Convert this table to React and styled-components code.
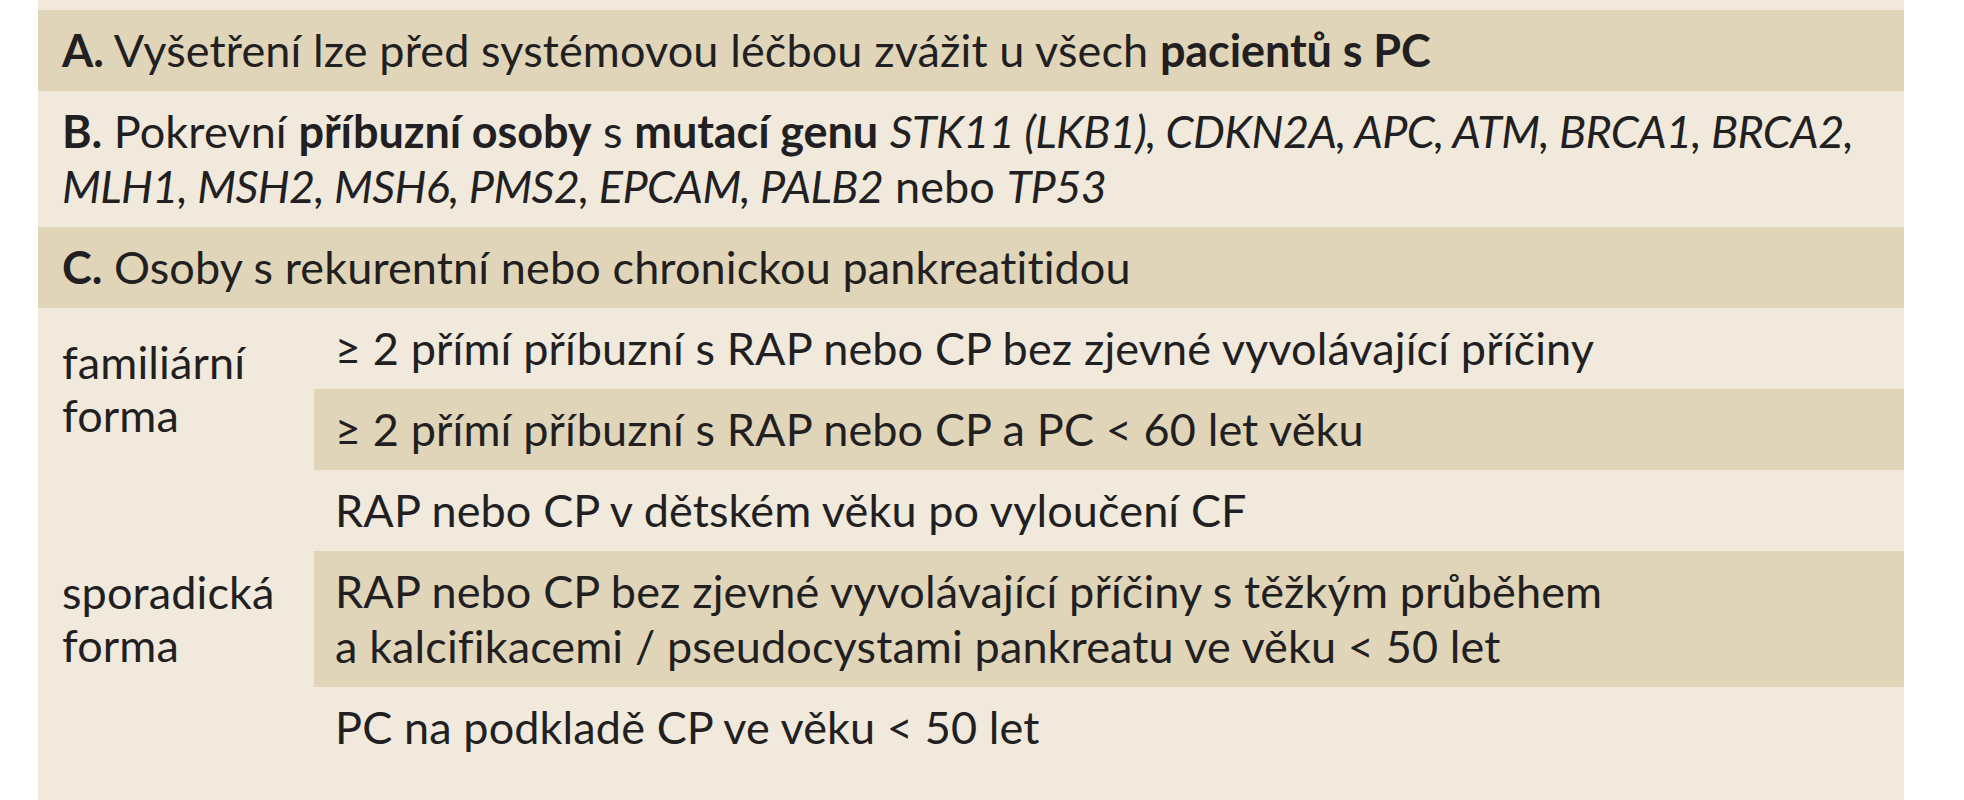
import React from "react";
import styled, { createGlobalStyle } from "styled-components";

const Global = createGlobalStyle`
  html, body { margin: 0; padding: 0; background: #ffffff; }
  body { font-family: Lato, "Open Sans", sans-serif; color: #221f22; }
`;

const DARK = "#e0d5b8";
const LIGHT = "#f0e9dc";

const Page = styled.div`
  width: 1964px;
  height: 800px;
  overflow: hidden;
  background: #ffffff;
`;

const Panel = styled.div`
  margin-left: 38px;
  width: 1866px;
  min-height: 800px;
  padding-top: 10px;
  box-sizing: border-box;
  background: ${LIGHT};
  font-family: Lato, "Open Sans", sans-serif;
  font-size: 45px;
  line-height: 55px;
  letter-spacing: 0.12px;
  color: #221f22;
`;

const Row = styled.div`
  background: ${(p) => (p.$shade ? DARK : "transparent")};
  padding: 13px 24px;
  white-space: nowrap;
`;

const SubGrid = styled.div`
  display: grid;
  grid-template-columns: 276px 1fr;
`;

const Label = styled.div`
  grid-column: 1;
  grid-row: ${(p) => p.$rows};
  display: flex;
  align-items: center;
  padding-left: 24px;
  line-height: 53px;
`;

const Cell = styled.div`
  grid-column: 2;
  background: ${(p) => (p.$shade ? DARK : "transparent")};
  padding: 13px 21px;
  white-space: nowrap;
`;

const B = styled.b`
  font-weight: 700;
  letter-spacing: -0.1px;
`;

const I = styled.i`
  font-style: italic;
  letter-spacing: -0.6px;
`;

export default function App() {
  return (
    <Page>
      <Global />
      <Panel>
        <Row $shade>
          <B>A.</B> Vyšetření lze před systémovou léčbou zvážit u všech <B>pacientů s PC</B>
        </Row>
        <Row>
          <B>B.</B> Pokrevní <B>příbuzní osoby</B> s <B>mutací genu</B>{" "}
          <I>STK11 (LKB1), CDKN2A, APC, ATM, BRCA1, BRCA2,</I>
          <br />
          <I>MLH1, MSH2, MSH6, PMS2, EPCAM, PALB2</I> nebo <I>TP53</I>
        </Row>
        <Row $shade>
          <B>C.</B> Osoby s rekurentní nebo chronickou pankreatitidou
        </Row>
        <SubGrid>
          <Label $rows="1 / span 2">
            <span>
              familiární
              <br />
              forma
            </span>
          </Label>
          <Cell>≥ 2 přímí příbuzní s RAP nebo CP bez zjevné vyvolávající příčiny</Cell>
          <Cell $shade>≥ 2 přímí příbuzní s RAP nebo CP a PC &lt; 60 let věku</Cell>
          <Label $rows="3 / span 3">
            <span>
              sporadická
              <br />
              forma
            </span>
          </Label>
          <Cell>RAP nebo CP v dětském věku po vyloučení CF</Cell>
          <Cell $shade>
            RAP nebo CP bez zjevné vyvolávající příčiny s těžkým průběhem
            <br />
            a kalcifikacemi / pseudocystami pankreatu ve věku &lt; 50 let
          </Cell>
          <Cell>PC na podkladě CP ve věku &lt; 50 let</Cell>
        </SubGrid>
      </Panel>
    </Page>
  );
}
